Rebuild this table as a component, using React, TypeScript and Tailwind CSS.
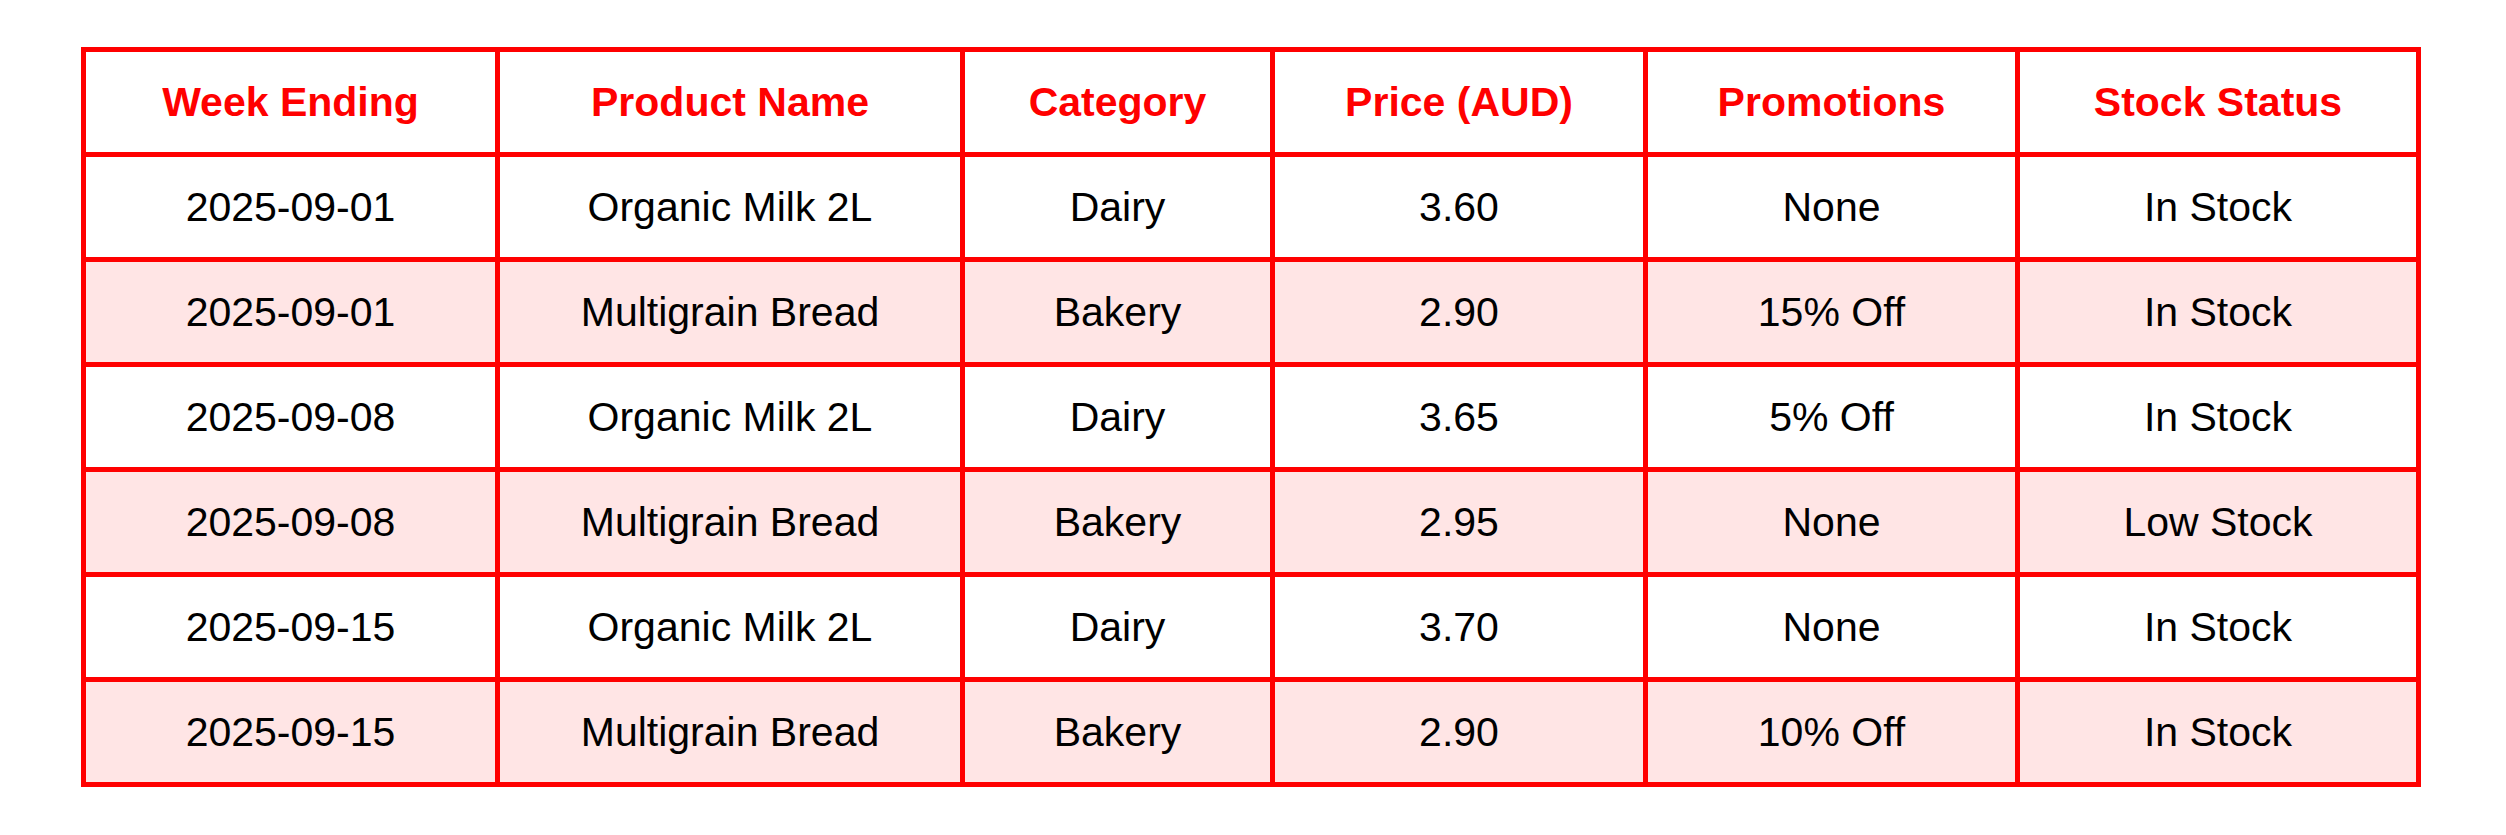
const COLUMNS = [
  { label: 'Week Ending', width: 'w-[414px]' },
  { label: 'Product Name', width: 'w-[465px]' },
  { label: 'Category', width: 'w-[310px]' },
  { label: 'Price (AUD)', width: 'w-[373px]' },
  { label: 'Promotions', width: 'w-[372px]' },
  { label: 'Stock Status', width: 'w-[401px]' },
];

const ROWS = [
  ['2025-09-01', 'Organic Milk 2L', 'Dairy', '3.60', 'None', 'In Stock'],
  ['2025-09-01', 'Multigrain Bread', 'Bakery', '2.90', '15% Off', 'In Stock'],
  ['2025-09-08', 'Organic Milk 2L', 'Dairy', '3.65', '5% Off', 'In Stock'],
  ['2025-09-08', 'Multigrain Bread', 'Bakery', '2.95', 'None', 'Low Stock'],
  ['2025-09-15', 'Organic Milk 2L', 'Dairy', '3.70', 'None', 'In Stock'],
  ['2025-09-15', 'Multigrain Bread', 'Bakery', '2.90', '10% Off', 'In Stock'],
];

export default function App() {
  return (
    <div className="min-h-screen bg-white pt-[47px] pl-[81px] font-['Liberation_Sans',Arial,sans-serif]">
      <table className="table-fixed border-collapse border-[5px] border-[#ff0000] text-[41px] leading-[47px]">
        <colgroup>
          {COLUMNS.map((c) => (
            <col key={c.label} className={c.width} />
          ))}
        </colgroup>
        <thead>
          <tr className="h-[105px]">
            {COLUMNS.map((c) => (
              <th
                key={c.label}
                className="border-[5px] border-[#ff0000] text-center font-bold text-[#ff0000] p-0"
              >
                {c.label}
              </th>
            ))}
          </tr>
        </thead>
        <tbody>
          {ROWS.map((row, i) => (
            <tr key={i} className={`h-[105px] ${i % 2 === 1 ? 'bg-[#ffe5e5]' : 'bg-white'}`}>
              {row.map((cell, j) => (
                <td key={j} className="border-[5px] border-[#ff0000] text-center text-black p-0">
                  {cell}
                </td>
              ))}
            </tr>
          ))}
        </tbody>
      </table>
    </div>
  );
}
